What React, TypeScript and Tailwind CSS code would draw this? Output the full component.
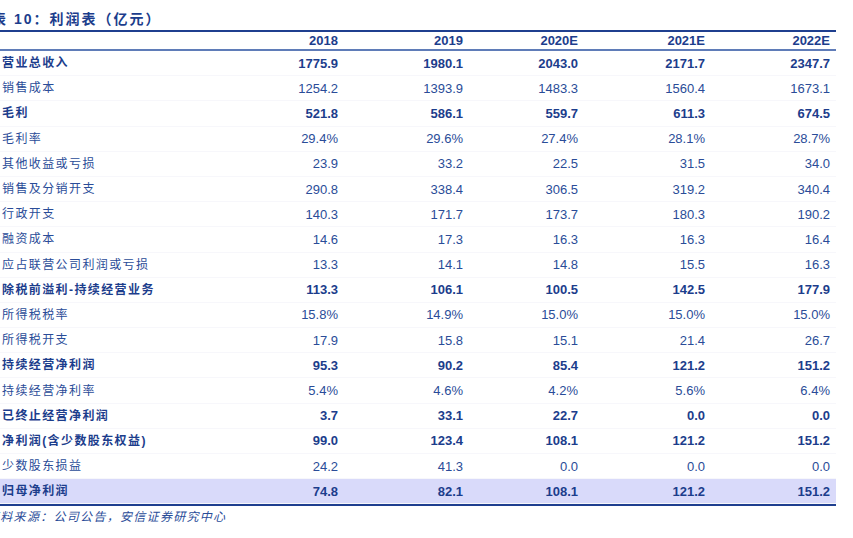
import React from "react";

type Row = { label: string; values: string[]; bold?: boolean; hl?: boolean };

const rows: Row[] = [
  { label: "营业总收入", values: ["1775.9", "1980.1", "2043.0", "2171.7", "2347.7"], bold: true },
  { label: "销售成本", values: ["1254.2", "1393.9", "1483.3", "1560.4", "1673.1"] },
  { label: "毛利", values: ["521.8", "586.1", "559.7", "611.3", "674.5"], bold: true },
  { label: "毛利率", values: ["29.4%", "29.6%", "27.4%", "28.1%", "28.7%"] },
  { label: "其他收益或亏损", values: ["23.9", "33.2", "22.5", "31.5", "34.0"] },
  { label: "销售及分销开支", values: ["290.8", "338.4", "306.5", "319.2", "340.4"] },
  { label: "行政开支", values: ["140.3", "171.7", "173.7", "180.3", "190.2"] },
  { label: "融资成本", values: ["14.6", "17.3", "16.3", "16.3", "16.4"] },
  { label: "应占联营公司利润或亏损", values: ["13.3", "14.1", "14.8", "15.5", "16.3"] },
  { label: "除税前溢利-持续经营业务", values: ["113.3", "106.1", "100.5", "142.5", "177.9"], bold: true },
  { label: "所得税税率", values: ["15.8%", "14.9%", "15.0%", "15.0%", "15.0%"] },
  { label: "所得税开支", values: ["17.9", "15.8", "15.1", "21.4", "26.7"] },
  { label: "持续经营净利润", values: ["95.3", "90.2", "85.4", "121.2", "151.2"], bold: true },
  { label: "持续经营净利率", values: ["5.4%", "4.6%", "4.2%", "5.6%", "6.4%"] },
  { label: "已终止经营净利润", values: ["3.7", "33.1", "22.7", "0.0", "0.0"], bold: true },
  { label: "净利润(含少数股东权益)", values: ["99.0", "123.4", "108.1", "121.2", "151.2"], bold: true },
  { label: "少数股东损益", values: ["24.2", "41.3", "0.0", "0.0", "0.0"] },
  { label: "归母净利润", values: ["74.8", "82.1", "108.1", "121.2", "151.2"], bold: true, hl: true },
];

const years = ["2018", "2019", "2020E", "2021E", "2022E"];
const font = { fontFamily: '"Liberation Sans", "Noto Sans CJK SC", sans-serif' };

export default function App() {
  return (
    <div className="w-[853px] h-[538px] bg-white overflow-hidden text-[#1f4191]" style={font}>
      <div className="w-[836px]">
        <div className="h-[30px] flex items-end pb-[3px]">
          <div className="-ml-[8px] text-[14px] leading-[16px] font-bold tracking-[2px] text-[#1c3d8c] whitespace-nowrap">
            表 10：利润表（亿元）
          </div>
        </div>
        <div className="h-[2px] bg-[#1f3f8f]" />
        <div className="grid grid-cols-[218px_126px_125px_115px_127px_125px] h-[17px] items-center">
          <div />
          {years.map((y) => (
            <div key={y} className="text-right pr-[6px] text-[13px] leading-[15px] font-bold text-[#1c3d8c]">
              {y}
            </div>
          ))}
        </div>
        <div className="h-[2px] bg-[#5f7cb8]" />
        {rows.map((r) => (
          <div
            key={r.label}
            className={
              "grid grid-cols-[218px_126px_125px_115px_127px_125px] h-[25.2px] items-center border-b border-[#f7f7fb] " +
              (r.hl ? "bg-[#d9dafa]" : "")
            }
          >
            <div
              className={
                "pl-[2px] text-[12px] leading-[14px] tracking-[1.4px] whitespace-nowrap " +
                (r.bold ? "font-bold text-[#1c3d8c]" : "text-[#2a4c98]")
              }
            >
              {r.label}
            </div>
            {r.values.map((v, i) => (
              <div
                key={i}
                className={
                  "text-right pr-[6px] text-[13px] leading-[15px] " +
                  (r.bold ? "font-bold text-[#1c3d8c]" : "text-[#2a4c98]")
                }
              >
                {v}
              </div>
            ))}
          </div>
        ))}
        <div className="h-[2px] bg-[#1f3f8f]" />
        <div className="-ml-[13px] mt-[4px] text-[12px] leading-[14px] italic tracking-[1.3px] text-[#2a4c98] whitespace-nowrap">
          资料来源：公司公告，安信证券研究中心
        </div>
      </div>
    </div>
  );
}
